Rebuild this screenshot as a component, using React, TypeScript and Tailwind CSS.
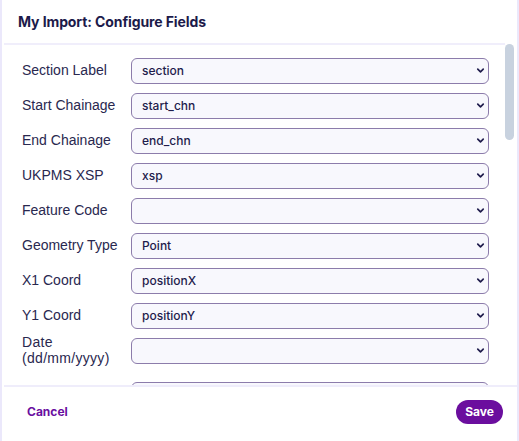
import { ChevronDown } from "lucide-react";

const fields = [
  { label: "Section Label", value: "section" },
  { label: "Start Chainage", value: "start_chn" },
  { label: "End Chainage", value: "end_chn" },
  { label: "UKPMS XSP", value: "xsp" },
  { label: "Feature Code", value: "" },
  { label: "Geometry Type", value: "Point" },
  { label: "X1 Coord", value: "positionX" },
  { label: "Y1 Coord", value: "positionY" },
  { label: "Date (dd/mm/yyyy)", value: "", twoLine: true },
  { label: "", value: "", extraGap: true },
];

function FieldSelect({ value }: { value: string }) {
  return (
    <div className="relative w-[358px] h-[26px]">
      <select
        defaultValue={value}
        className="appearance-none w-full h-full rounded-[6px] border-[1.5px] border-[#8c7cab] bg-[#f8f8fd] pl-[10px] pr-[28px] text-[12px] font-medium text-[#1f1c4c] outline-none"
      >
        <option value={value}>{value}</option>
      </select>
      <ChevronDown
        size={11}
        strokeWidth={3.6}
        className="pointer-events-none absolute right-[3px] top-[8px] text-[#1f1c4c]"
      />
    </div>
  );
}

export default function App() {
  return (
    <div
      className="w-[519px] h-[441px] bg-white border-x-2 border-[#ebe8fb] flex flex-col overflow-hidden"
      style={{ fontFamily: "Inter, 'Noto Sans', sans-serif" }}
    >
      <div className="h-[43px] shrink-0 flex items-center pl-[16px]">
        <h1 className="text-[14px] font-bold text-[#1c1a4a] tracking-[-0.1px]">
          My Import: Configure Fields
        </h1>
      </div>

      <div className="flex-1 flex min-h-0">
        <div className="flex-1 ml-[2px] border-t-2 border-[#f0eefb] overflow-hidden">
          <div className="flex flex-col gap-[9px] pt-[12px] pl-[18px]">
            {fields.map((f, i) => (
              <div
                key={i}
                className={`flex items-center h-[26px] ${f.extraGap ? "mt-[9px]" : ""}`}
              >
                <label
                  className={`w-[109px] shrink-0 font-['Liberation_Sans',sans-serif] text-[14px] text-[#29284f] ${
                    f.twoLine ? "leading-[16px] tracking-[0.3px]" : "leading-[18px]"
                  }`}
                >
                  {f.label}
                </label>
                <FieldSelect value={f.value} />
              </div>
            ))}
          </div>
        </div>
        <div className="w-[12px] shrink-0 pt-[1px] pr-[2px] bg-white">
          <div className="h-[96px] w-[9px] rounded-full bg-[#c8d2df]" />
        </div>
      </div>

      <div className="h-[56px] shrink-0 ml-[2px] border-t-2 border-[#efedfb] flex items-center justify-between pl-[23px] pr-[14px] pb-[4px]">
        <button className="text-[12px] font-bold text-[#6a0f9f]">Cancel</button>
        <button className="h-[24px] px-[9px] rounded-full bg-[#6b0e9e] text-[12px] font-bold text-white">
          Save
        </button>
      </div>
    </div>
  );
}
